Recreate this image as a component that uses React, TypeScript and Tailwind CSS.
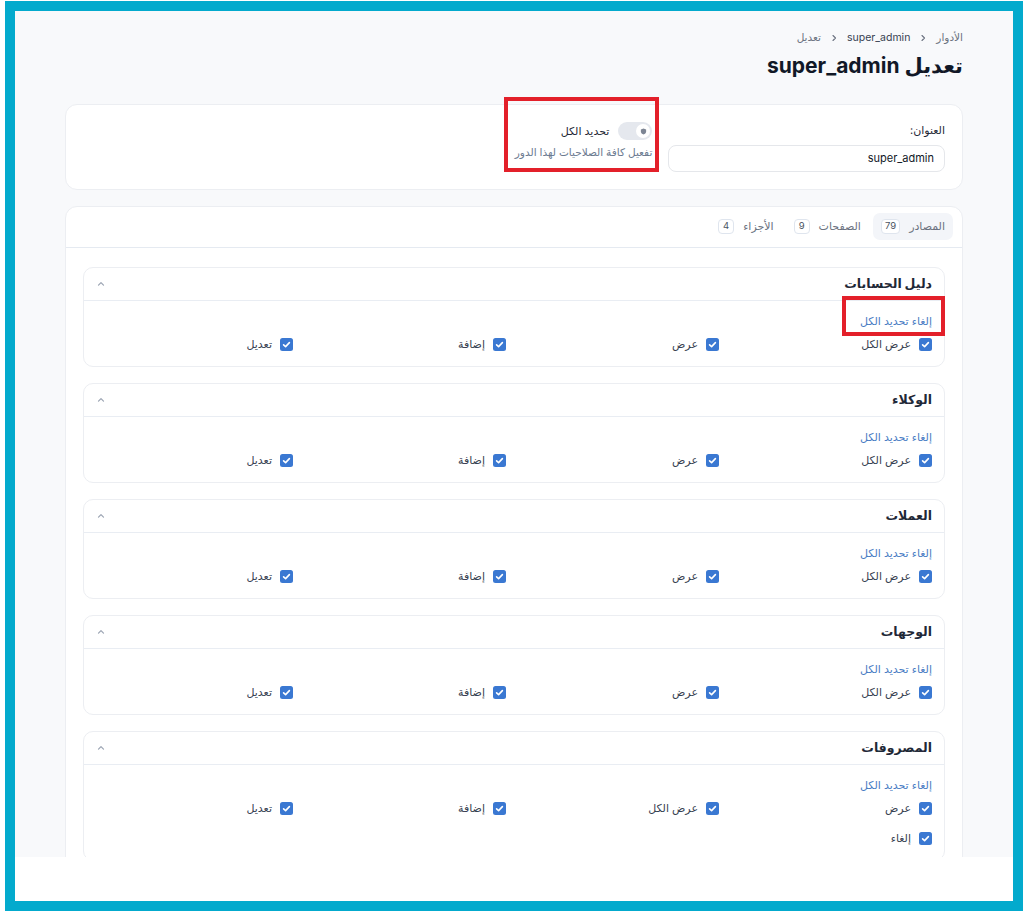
import React from "react";

const FONT = { fontFamily: "Inter, 'DejaVu Sans', 'Noto Sans', sans-serif" };

function Check() {
  return (
    <svg width="13" height="13" viewBox="0 0 13 13" className="shrink-0">
      <rect x="0" y="0" width="13" height="13" rx="2.5" fill="#3a78d2" />
      <path d="M3.6 6.8 L5.6 8.6 L9.4 4.6" stroke="#fff" strokeWidth="1.6" fill="none" strokeLinecap="round" strokeLinejoin="round" />
    </svg>
  );
}

function ChevUp() {
  return (
    <svg width="10" height="10" viewBox="0 0 10 10">
      <path d="M2.5 6.2 L5 3.7 L7.5 6.2" stroke="#9aa3b2" strokeWidth="1.2" fill="none" strokeLinecap="round" strokeLinejoin="round" />
    </svg>
  );
}

function ChevSep() {
  return (
    <svg width="8" height="8" viewBox="0 0 8 8">
      <path d="M3 1.5 L5.5 4 L3 6.5" stroke="#6b7280" strokeWidth="1.1" fill="none" strokeLinecap="round" strokeLinejoin="round" />
    </svg>
  );
}

function Item({ label }: { label: string }) {
  return (
    <div className="flex items-center gap-2 h-[16px]">
      <Check />
      <span className="text-[11px] text-[#374151] leading-none">{label}</span>
    </div>
  );
}

function Section({ title, rows }: { title: string; rows: string[][] }) {
  return (
    <div className="bg-white border border-[#eceef2] rounded-[10px]">
      <div className="h-[33px] flex items-center justify-between px-3 border-b border-[#e9edf3]">
        <span className="text-[12.5px] font-bold text-[#1f2937]">{title}</span>
        <span><ChevUp /></span>
      </div>
      <div className="px-3 pt-[12px] pb-[14px]">
        <div className="text-[11px] text-[#4a7cc4] leading-[16px] mb-[7px]">إلغاء تحديد الكل</div>
        <div className="flex flex-col gap-[14px]">
          {rows.map((r, i) => (
            <div key={i} className="grid grid-cols-4 gap-4">
              {r.map((l, j) => (
                <Item key={j} label={l} />
              ))}
            </div>
          ))}
        </div>
      </div>
    </div>
  );
}

export default function App() {
  const std = [["عرض الكل", "عرض", "إضافة", "تعديل"]];
  return (
    <div className="w-[1024px] h-[911px] bg-white relative" style={FONT}>
      <div className="ml-[5px] mt-[1px] w-[1018px] h-[910px] border-[10px] border-[#03aacd] bg-white">
        <div className="h-[846px] bg-[#f8f9fb] overflow-hidden relative" dir="rtl">
          <div className="px-[50px] pt-[20px]">
            <div className="flex items-center gap-[9px] text-[10.5px] text-[#6b7280] h-[14px]">
              <span>الأدوار</span>
              <ChevSep />
              <span className="text-[#374151]">super_admin</span>
              <ChevSep />
              <span>تعديل</span>
            </div>
            <h1 className="text-[21px] font-bold text-[#111827] leading-[32px] mt-[5px]">تعديل super_admin</h1>

            <div className="mt-[22px] bg-white border border-[#eceef2] rounded-[12px] p-[17px] grid grid-cols-3 gap-4">
              <div>
                <div className="text-[11px] text-[#1f2937] h-[16px] leading-[16px]">العنوان:</div>
                <div className="mt-[7px] h-[27px] border border-[#e5e7eb] rounded-[8px] flex items-center px-[10px] text-[11px] text-[#111827]">
                  super_admin
                </div>
              </div>
              <div>
                <div className="flex items-center gap-[9px] h-[16px] mt-[1px]">
                  <div className="w-[34px] h-[18px] rounded-full bg-[#e5e8ee] flex items-center px-[2px]">
                    <div className="w-[14px] h-[14px] rounded-full bg-white flex items-center justify-center">
                      <svg width="7" height="7" viewBox="0 0 8 8">
                        <path d="M4 0.6 L7 1.7 V4 C7 5.8 5.6 7 4 7.5 C2.4 7 1 5.8 1 4 V1.7 Z" fill="#7d8594" />
                      </svg>
                    </div>
                  </div>
                  <span className="text-[11px] text-[#1f2937]">تحديد الكل</span>
                </div>
                <div className="text-[10.5px] text-[#6b7a90] mt-[6px]">تفعيل كافة الصلاحيات لهذا الدور</div>
              </div>
              <div />
            </div>

            <div className="mt-[16px] bg-white border border-[#eceef2] rounded-[12px]">
              <div className="px-[9px] pt-[6px] pb-[7px] border-b border-[#e5eaf1] flex items-center gap-[4px]">
                <div className="h-[27px] px-[8px] rounded-[7px] bg-[#f3f5f9] flex items-center gap-[9px]">
                  <span className="text-[11px] text-[#6b7280]">المصادر</span>
                  <span className="h-[15px] min-w-[16px] px-[3px] rounded-[4px] border border-[#dfe5ee] bg-white text-[9.5px] text-[#4b5563] flex items-center justify-center">79</span>
                </div>
                <div className="h-[27px] px-[8px] flex items-center gap-[9px]">
                  <span className="text-[11px] text-[#6b7280]">الصفحات</span>
                  <span className="h-[15px] min-w-[16px] px-[3px] rounded-[4px] border border-[#dfe5ee] bg-white text-[9.5px] text-[#4b5563] flex items-center justify-center">9</span>
                </div>
                <div className="h-[27px] px-[8px] flex items-center gap-[9px]">
                  <span className="text-[11px] text-[#6b7280]">الأجزاء</span>
                  <span className="h-[15px] min-w-[16px] px-[3px] rounded-[4px] border border-[#dfe5ee] bg-white text-[9.5px] text-[#4b5563] flex items-center justify-center">4</span>
                </div>
              </div>
              <div className="px-[17px] pt-[19px] pb-[18px] flex flex-col gap-4">
                <Section title="دليل الحسابات" rows={std} />
                <Section title="الوكلاء" rows={std} />
                <Section title="العملات" rows={std} />
                <Section title="الوجهات" rows={std} />
                <Section title="المصروفات" rows={[["عرض", "عرض الكل", "إضافة", "تعديل"], ["إلغاء"]]} />
              </div>
            </div>
          </div>

          <div className="absolute left-[489px] top-[86px] w-[155px] h-[75px] border-[4px] border-[#e3202a]" />
          <div className="absolute left-[827px] top-[285px] w-[103px] h-[40px] border-[4px] border-[#e3202a]" />
        </div>
      </div>
    </div>
  );
}
